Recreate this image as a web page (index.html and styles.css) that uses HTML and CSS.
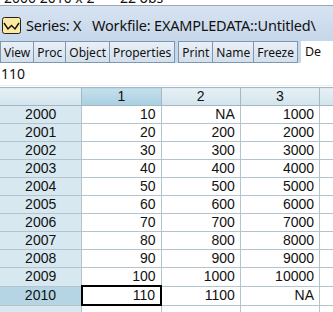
FILE: index.html
```html
<!DOCTYPE html>
<html>
    <head>
        <title>Series: X</title>
        <link rel="stylesheet" href="styles.css">
    </head>
    <body>
        <div class="strip"><span>2000 2010 x 2&nbsp;&nbsp;&nbsp;&nbsp;&nbsp;&nbsp;&nbsp;22 obs</span></div>
        <div class="titlebar">
            <svg class="ico" width="19" height="17" viewBox="0 0 19 17">
                <rect x="0.5" y="0.5" width="18" height="16" rx="2" fill="#fbeaa0" stroke="#222"/>
                <polyline points="2,6 6,12 9.5,8.5 13,12 17,6" fill="none" stroke="#111" stroke-width="1.4"/>
            </svg>
            <span class="ttl">Series: X&nbsp;&nbsp;&nbsp;Workfile: EXAMPLEDATA::Untitled\</span>
        </div>
        <div class="toolbar">
            <div class="grp">
                <button class="tb">View</button><button class="tb">Proc</button><button class="tb">Object</button><button class="tb">Properties</button>
            </div>
            <div class="grp">
                <button class="tb">Print</button><button class="tb">Name</button><button class="tb">Freeze</button>
            </div>
            <div class="tail">De</div>
        </div>
        <div class="editline">110</div>
        <table class="sheet">
            <tr class="head">
                <th class="lbl"></th><th class="sel">1</th><th>2</th><th>3</th><th class="rest"></th>
            </tr>
            <tr><td class="lbl">2000</td><td>10</td><td>NA</td><td>1000</td><td class="rest"></td></tr>
            <tr><td class="lbl">2001</td><td>20</td><td>200</td><td>2000</td><td class="rest"></td></tr>
            <tr><td class="lbl">2002</td><td>30</td><td>300</td><td>3000</td><td class="rest"></td></tr>
            <tr><td class="lbl">2003</td><td>40</td><td>400</td><td>4000</td><td class="rest"></td></tr>
            <tr><td class="lbl">2004</td><td>50</td><td>500</td><td>5000</td><td class="rest"></td></tr>
            <tr><td class="lbl">2005</td><td>60</td><td>600</td><td>6000</td><td class="rest"></td></tr>
            <tr><td class="lbl">2006</td><td>70</td><td>700</td><td>7000</td><td class="rest"></td></tr>
            <tr><td class="lbl">2007</td><td>80</td><td>800</td><td>8000</td><td class="rest"></td></tr>
            <tr><td class="lbl">2008</td><td>90</td><td>900</td><td>9000</td><td class="rest"></td></tr>
            <tr><td class="lbl">2009</td><td>100</td><td>1000</td><td>10000</td><td class="rest"></td></tr>
            <tr><td class="lbl cur">2010</td><td class="active">110</td><td>1100</td><td>NA</td><td class="rest"></td></tr>
            <tr><td class="lbl"></td><td></td><td></td><td></td><td class="rest"></td></tr>
        </table>
    </body>
</html>
```

FILE: styles.css
```css
body{
    margin: 0;
    width: 333px;
    height: 312px;
    overflow: hidden;
    background: white;
    font-family: "Noto Sans", "Open Sans", sans-serif;
    color: #111;
}
.strip{
    height: 5px;
    overflow: hidden;
    background: white;
    border-bottom: 1px solid #9aa8b6;
    font-size: 14px;
    line-height: 14px;
    padding-left: 4px;
    white-space: nowrap;
}
.strip span{
    display: block;
    margin-top: -9px;
}
.titlebar{
    height: 34px;
    display: flex;
    align-items: center;
    padding-left: 2px;
    padding-top: 1px;
    background: linear-gradient(#d7e3f1, #c6d7ea);
    white-space: nowrap;
    overflow: hidden;
}
.ico{
    flex: none;
    margin-right: 5px;
    margin-top: 2px;
}
.ttl{
    font-size: 14.5px;
    letter-spacing: -0.2px;
    margin-top: 2px;
}
.toolbar{
    height: 22px;
    display: flex;
    background: #c6d7ea;
    white-space: nowrap;
    overflow: hidden;
}
.grp{
    display: flex;
    margin-right: 3px;
}
.tb{
    font-family: "Noto Sans", sans-serif;
    font-size: 12px;
    color: #111;
    height: 22px;
    padding: 0 3px;
    margin: 0;
    border: 1px solid #7f97ad;
    border-left-width: 0;
    background: linear-gradient(#e9f0f7, #d3dfec);
    line-height: 19px;
}
.grp .tb:first-child{
    border-left-width: 1px;
}
.tail{
    flex: 1;
    background: white;
    font-size: 12.5px;
    line-height: 22px;
    padding-left: 4px;
}
.editline{
    height: 22px;
    line-height: 22px;
    font-size: 14px;
    padding-left: 1px;
    border-bottom: 1px solid #e8eef2;
}
.sheet{
    border-collapse: collapse;
    table-layout: fixed;
    width: 342px;
    font-family: "Liberation Sans", Arial, sans-serif;
    font-size: 14px;
    margin-top: 1px;
}
.sheet td, .sheet th{
    border: 1px solid #b4c4ce;
    height: 17px;
    padding: 0 5px 0 0;
    text-align: right;
    line-height: 17px;
    font-weight: normal;
    white-space: nowrap;
}
.sheet th{
    text-align: center;
    padding: 0;
    background: linear-gradient(#e6f0f5, #d3e4ed);
    border-color: #a4b8c4;
}
.sheet th.sel{
    background: linear-gradient(#c6e0ec, #a9cfe1);
}
.sheet .lbl{
    width: 78px;
    text-align: center;
    padding: 0;
    background: #d7e8f0;
    border-left: none;
}
.sheet .lbl.cur{
    background: #b5d5e5;
}
.sheet th.lbl{
    background: linear-gradient(#e6f0f5, #d3e4ed);
}
.sheet .active{
    border: 2px solid #000;
}
.sheet .rest{
    width: 20px;
    padding: 0;
}
.sheet tr td:nth-child(2), .sheet tr th:nth-child(2),
.sheet tr td:nth-child(3), .sheet tr th:nth-child(3),
.sheet tr td:nth-child(4), .sheet tr th:nth-child(4){
    width: 75px;
}
```
